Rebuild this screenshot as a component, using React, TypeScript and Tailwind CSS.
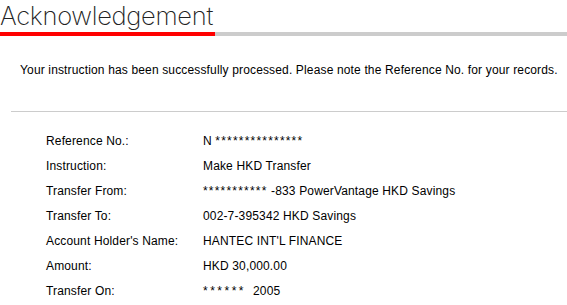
import React from "react";

const Stars = ({ n }: { n: number }) => (
  <span className="tracking-[1.2px] text-[12px]">{"*".repeat(n)}</span>
);

const rows: [string, React.ReactNode][] = [
  ["Reference No.:", <>N <Stars n={15} /></>],
  ["Instruction:", "Make HKD Transfer"],
  ["Transfer From:", <><Stars n={11} /> -833 PowerVantage HKD Savings</>],
  ["Transfer To:", "002-7-395342 HKD Savings"],
  ["Account Holder's Name:", "HANTEC INT'L FINANCE"],
  ["Amount:", "HKD 30,000.00"],
  ["Transfer On:", <><span className="tracking-[2.5px] text-[12px]">******</span>  2005</>],
];

export default function App() {
  return (
    <div className="w-[567px] h-[305px] overflow-hidden bg-white text-black" style={{ fontFamily: '"Liberation Sans", Arial, sans-serif' }}>
      <div className="h-[32px] pt-[1px]">
        <h1 className="text-[25.5px] leading-[30px] font-[200] text-[#222] tracking-[-0.3px]" style={{ fontFamily: 'Inter, "Liberation Sans", sans-serif' }}>
          Acknowledgement
        </h1>
      </div>
      <div className="flex h-[4px]">
        <div className="w-[215px] bg-[#ff0000]" />
        <div className="flex-1 bg-[#cccccc]" />
      </div>
      <p className="pl-[20px] pt-[27px] text-[12px] leading-[14px] tracking-[0.15px]">
        Your instruction has been successfully processed. Please note the Reference No. for your records.
      </p>
      <div className="ml-[11px] mt-[34px] h-[1px] bg-[#cccccc]" />
      <div className="pt-[22px] pl-[46px] flex flex-col">
        {rows.map(([k, v]) => (
          <div key={k} className="flex h-[25px] text-[12px] leading-[14px] tracking-[0.15px]">
            <div className="w-[157px]">{k}</div>
            <div className="whitespace-pre">{v}</div>
          </div>
        ))}
      </div>
    </div>
  );
}
